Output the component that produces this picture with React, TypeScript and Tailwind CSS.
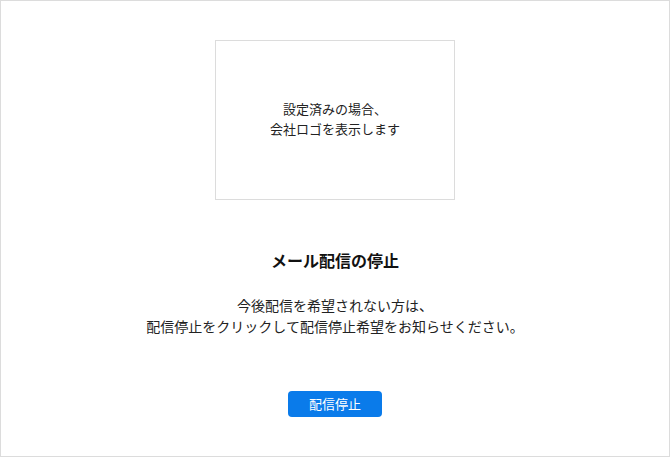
const App = () => {
  return (
    <div
      className="w-[670px] h-[457px] border border-[#dcdcdc] bg-white flex flex-col items-center text-[#222]"
      style={{ fontFamily: '"Liberation Sans", "Noto Sans CJK JP", sans-serif' }}
    >
      {/* Logo placeholder */}
      <div className="mt-[39px] w-[240px] h-[160px] border border-[#dcdcdc] flex items-center justify-center">
        <p className="text-[13px] leading-[20px] text-center">
          設定済みの場合、
          <br />
          会社ロゴを表示します
        </p>
      </div>

      {/* Title */}
      <h1 className="mt-[50px] text-[16px] leading-[24px] font-bold text-[#111]">
        メール配信の停止
      </h1>

      {/* Message */}
      <p className="mt-[22px] text-[14px] leading-[21px] text-center">
        今後配信を希望されない方は、
        <br />
        配信停止をクリックして配信停止希望をお知らせください。
      </p>

      {/* Button */}
      <button className="mt-[53px] w-[94px] h-[26px] rounded-[4px] bg-[#0a7bea] text-white text-[13px] leading-none">
        配信停止
      </button>
    </div>
  );
};

export default App;
